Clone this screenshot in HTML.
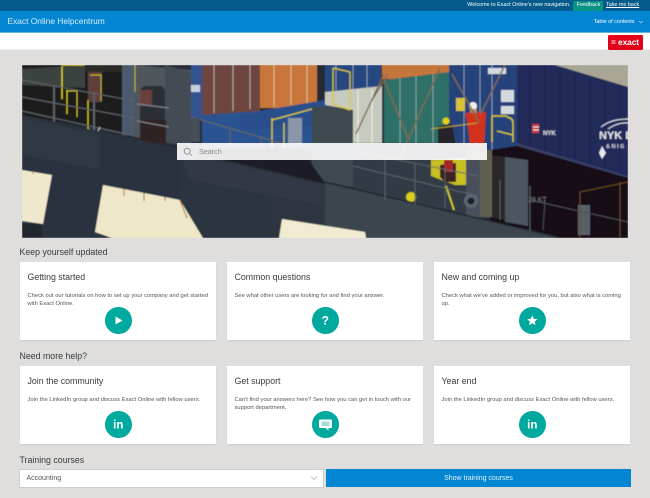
<!DOCTYPE html>
<html>
<head>
<meta charset="utf-8">
<style>
html,body{margin:0;padding:0}
body{width:650px;height:498px;overflow:hidden;background:#dfdedc;font-family:"Liberation Sans",Arial,sans-serif;position:relative}
div,svg,span{position:absolute;box-sizing:border-box}
.t{white-space:nowrap}
.h{left:19.5px;font-size:8.8px;color:#3a3a3a;white-space:nowrap;line-height:12px}
.card{width:196px;height:78px;background:#fff;box-shadow:0 1px 1px rgba(0,0,0,.08)}
.card .ti{left:7.5px;top:9px;font-size:8.8px;line-height:13px;color:#3a3a3a;white-space:nowrap}
.card .b{left:7.5px;top:29.5px;width:184px;font-size:5.8px;line-height:8.5px;color:#555}
.c{width:26.6px;height:26.6px;border-radius:50%;background:#00a99d;left:85px;top:45px}
.c svg{left:0;top:0}
</style>
</head>
<body>
<div style="left:0;top:0;width:650px;height:11px;background:#045b8b"></div>
<div style="left:0;top:11px;width:650px;height:21px;background:#0286d2"></div>
<div style="left:0;top:32px;width:650px;height:1px;background:#5fb3e4"></div>
<div style="left:0;top:33px;width:650px;height:17px;background:#fff"></div>
<div style="left:0;top:49px;width:650px;height:1px;background:#eeeeec"></div>
<div class="t" style="left:7.5px;top:15px;font-size:8.4px;line-height:12px;color:#d9eefa">Exact Online Helpcentrum</div>
<div class="t" style="left:467.3px;top:1px;font-size:5.4px;line-height:9px;color:#fff">Welcome to Exact Online's new navigation.</div>
<div style="left:573px;top:1px;width:30px;height:10px;background:#079283"></div>
<div class="t" style="left:576.7px;top:1px;font-size:5.4px;line-height:9px;color:#fff">Feedback</div>
<div class="t" style="left:606px;top:1px;font-size:5.4px;line-height:9px;color:#fff;text-decoration:underline">Take me back</div>
<div class="t" style="left:593.7px;top:17.5px;font-size:5.4px;line-height:9px;color:#fff">Table of contents</div>
<svg style="left:638px;top:20px" width="6" height="4" viewBox="0 0 6 4"><path d="M1 1l2 2 2-2" fill="none" stroke="#bfe0f5" stroke-width=".6"/></svg>
<div style="left:608px;top:35px;width:35px;height:15px;background:#e2001a;border-radius:1.5px"></div>
<div class="t" style="left:611px;top:37px;font-size:8.4px;line-height:10px;font-weight:bold;color:#fff;letter-spacing:-.1px">= exact</div>

<svg style="left:22px;top:65px" width="606" height="173" viewBox="22 65 606 173">
<defs><filter id="bl" x="-2%" y="-2%" width="104%" height="104%"><feGaussianBlur stdDeviation=".6"/></filter>
<linearGradient id="hg" x1="0" y1="0" x2="1" y2="0"><stop offset="0" stop-color="#2a3240"/><stop offset=".5" stop-color="#2d3541"/><stop offset="1" stop-color="#3b444c"/></linearGradient></defs>
<g filter="url(#bl)">
<rect x="22" y="65" width="606" height="173" fill="#262c36"/>
<!-- top-left superstructure -->
<polygon points="22,65 135,65 135,135 22,115" fill="#1a1b1e"/>
<polygon points="22,69 85,65 85,88 22,85" fill="#3b4341"/>
<polygon points="85,65 135,65 135,72 85,72" fill="#2a2a26"/>
<rect x="88" y="72" width="14" height="30" fill="#5e3f3c"/>
<rect x="122" y="65" width="13" height="70" fill="#4b5a6c"/>
<polygon points="135,65 191,70 191,147 135,137" fill="#50565c"/>
<polygon points="165,65 191,72 191,147 165,142" fill="#454c55"/>
<path d="M140 130V92q0-6 8-6h11q6 0 6 8v51z" fill="#2a2e36"/>
<rect x="140" y="120" width="26" height="23" fill="#2f2220"/>
<rect x="140" y="90" width="12" height="16" fill="#6a3f3e"/>
<path d="M66 91h11v26" fill="none" stroke="#c9b92a" stroke-width="1"/><path d="M67 90v24M88 100v30" fill="none" stroke="#d8c520" stroke-width="1.200"/>
<path d="M84 65h-22M62 66v33" fill="none" stroke="#e6d616" stroke-width="1.300"/>
<path d="M90 75h11v26M135 65v27" fill="none" stroke="#c9b92a" stroke-width=".9"/>
<path d="M22 80l113 21M22 97l113 21M22 111l113 25" fill="none" stroke="#5b6268" stroke-width="1.200"/>
<path d="M54 85v40M94 92v45" fill="none" stroke="#5b6268" stroke-width="2"/>
<path d="M137 104l32 4M137 121l32 6" fill="none" stroke="#7c838a" stroke-width="1.200"/>
<path d="M86 136l4-7M96 135l4-8" stroke="#cfd3d0" stroke-width=".9"/>
<!-- containers -->
<rect x="191" y="65" width="11" height="55" fill="#32528f"/>
<rect x="191" y="85" width="9" height="7" fill="#c9d2dc"/>
<rect x="202" y="65" width="58" height="50" fill="#6e4540"/>
<path d="M214 65v48M233 65v46M250 65v44" stroke="#b5a8a0" stroke-width="1"/>
<rect x="260" y="65" width="57" height="43" fill="#c8763a"/>
<path d="M274 65v42M291 65v40M307 65v38" stroke="#e5bb90" stroke-width="1"/>
<polygon points="202,115 260,111 325,100 325,148 202,148" fill="#2c5291"/>
<polygon points="241,116 325,100 325,125 241,130" fill="#294d8c"/>
<rect x="288" y="118" width="14" height="26" fill="#8a97a8"/>
<rect x="325" y="65" width="56" height="27" fill="#27467f"/>
<path d="M336 65v25M353 65v25M367 65v24" stroke="#9fb0c4" stroke-width=".8"/>
<polygon points="325,92 382,86 382,170 325,165" fill="#c6cabf"/>
<path d="M358 90v75M372 90v75" stroke="#eef0ea" stroke-width="1"/>
<rect x="382" y="65" width="67" height="14" fill="#c6743a"/>
<polygon points="384,80 449,72 449,172 384,172" fill="#2f6f68"/>
<path d="M400 78v90M416 76v90M433 74v90" stroke="#7fa9a2" stroke-width="1"/>
<rect x="449" y="65" width="68" height="90" fill="#25427a"/>
<path d="M464 65v85M480 65v85M492 65v85" stroke="#8fa2bf" stroke-width=".9"/>
<rect x="456" y="98" width="9" height="13" fill="#d8c23a"/>
<rect x="501" y="90" width="13" height="12" fill="#d5dae0"/>
<rect x="501" y="106" width="13" height="8" fill="#d5dae0"/>
<rect x="488" y="68" width="18" height="6" fill="#d5dae0"/>
<!-- big navy container -->
<polygon points="517,65 555,65 628,87 628,176 517,145" fill="#242a5a"/>
<path d="M530 65v85M545 65v90M560 70v90M575 75v90M590 80v90M605 83v90M620 85v90" stroke="#1b2049" stroke-width="1.200"/>
<polygon points="555,65 628,65 628,87" fill="#a9a696"/>
<polygon points="517,143 628,176 628,178 517,148" fill="#3b4068"/>
<rect x="532" y="124" width="7" height="9" fill="#c63a3f"/>
<path d="M533 127h6M533 130h6" stroke="#f2ecec" stroke-width="1"/>
<text x="543" y="135" font-family="Liberation Sans" font-size="6" font-weight="bold" fill="#e6e6ee">NYK</text>
<text x="599" y="139" font-family="Liberation Sans" font-size="11" font-weight="bold" fill="#e6e6ee">NYK L</text>
<text x="606" y="148" font-family="Liberation Sans" font-size="5.500" font-weight="bold" fill="#d9d9e6">&amp; N I G</text>
<polygon points="602,146 606,153 602,159 599,153" fill="#e8e8f0"/>
<path d="M601 127q10-8 27-8M608 129q10-7 20-6" fill="none" stroke="#e6e6ee" stroke-width="1"/>
<!-- lower dark bay -->
<polygon points="517,146 628,178 628,238 558,238 490,220 490,150" fill="#140b12"/>
<polygon points="505,157 528,160 528,226 505,222" fill="#4d5560"/>
<polygon points="490,155 505,157 505,220 490,217" fill="#2a262c"/>
<rect x="578" y="205" width="12" height="30" fill="#586067"/>
<path d="M580 192l48-10M580 192v45M620 182v55" fill="none" stroke="#6a4c22" stroke-width="1"/>
<path d="M530 200l98 22M545 200l-2 30" fill="none" stroke="#4c5158" stroke-width=".9"/>
<text x="528" y="202" font-family="Liberation Sans" font-size="7" fill="#7a7c80">29  KT</text>
<!-- deck & equipment -->
<polygon points="353,143 487,143 490,218 470,218 353,188" fill="#333a44"/>
<rect x="312" y="107" width="13" height="75" fill="#3d4850"/>
<polygon points="325,105 353,110 353,187 325,184" fill="#3d4850"/>
<rect x="467" y="150" width="25" height="67" fill="#625e50"/>
<polygon points="466,160 480,160 480,217 466,214" fill="#47505c"/>
<circle cx="471" cy="201" r="7" fill="#5b6570"/>
<circle cx="471" cy="201" r="3.500" fill="#1e2228"/>
<polygon points="431,160 466,158 466,185 455,185 431,176" fill="#c8bf20"/>
<polygon points="440,165 456,163 456,182 445,182 440,177" fill="#3a2226"/>
<polygon points="444,160 453,160 453,172 444,172" fill="#a32625"/>
<path d="M446 186l8 24" stroke="#d7cc20" stroke-width="1.800"/>
<circle cx="411" cy="197" r="5" fill="#d8d014"/>
<path d="M272 120l40-11M272 118v48M284 123v30" fill="none" stroke="#d9c91e" stroke-width="1.400"/>
<path d="M333 68l17 4v38M333 68v36l17 6" fill="none" stroke="#d9c91e" stroke-width="1.300"/>
<path d="M492 116v26M507 117q6 1 6 6v19M492 116h15M497 131l16 4" fill="none" stroke="#d9c91e" stroke-width="1.400"/>
<!-- people -->
<polygon points="465,113 486,112 484,146 470,146 468,126" fill="#d2321c"/>
<circle cx="473" cy="106" r="4" fill="#f0f0ee"/>
<rect x="470" y="109" width="7" height="4" fill="#b88664"/>
<polygon points="438,126 452,124 456,146 438,146" fill="#28202a"/>
<circle cx="446" cy="121" r="3.500" fill="#e3d010"/>
<path d="M431 129l46-6" stroke="#bfa92a" stroke-width=".9"/>
<!-- braces -->
<path d="M384 74l-28 60M388 74l-16 26M384 80l24 58M440 68l-40 90M452 74l28 50M505 65l-25 50" fill="none" stroke="#7f6a4e" stroke-width="1.400"/>
<!-- rail middle -->
<path d="M191 117l110 32M230 130v30M261 138v30M292 148v27" fill="none" stroke="#5c666e" stroke-width="1.400"/>
<polygon points="191,118 200,118 200,142 191,142" fill="#454e56"/>
<polygon points="177,148 300,148 325,183" fill="#1c1f26"/>
<!-- hull -->
<polygon points="22,115 177,148 325,183 558,238 22,238" fill="url(#hg)"/>
<polygon points="325,183 500,223 558,238 325,238" fill="#3a444d"/>
<polygon points="22,118 100,134 100,170 22,155" fill="#2f3742"/>
<polygon points="180,152 320,185 320,205 190,180" fill="#303944"/>
<path d="M177 148l148 35" stroke="#1b1c20" stroke-width="1.500"/>
<path d="M325 182l233 55" stroke="#23272d" stroke-width="1.500"/>
<path d="M353 151l125 25M353 166l125 30M385 155v45M415 163v42M445 168v40M500 180v40M530 186v45" fill="none" stroke="#5c666e" stroke-width=".9"/>
<!-- white patches -->
<polygon points="22,170 52,175 43,224 22,221" fill="#efe8cc"/>
<polygon points="103,185 180,200 203,238 112,238 95,232" fill="#efe8c8"/>
<polygon points="282,219 365,232 366,238 279,238" fill="#f1ebd2"/>
<path d="M33 171v3M124 189v7M144 193v8M165 197v4M180 200l7 18" stroke="#a9642a" stroke-width="1"/>
<rect x="22" y="224" width="20" height="14" fill="#20252e"/>
</g>
</svg>

<div style="left:177px;top:143px;width:310px;height:17px;background:rgba(255,255,255,.9)"></div>
<svg style="left:183px;top:147px" width="10" height="10" viewBox="0 0 10 10"><circle cx="4.200" cy="4.200" r="3" fill="none" stroke="#8a8a8a" stroke-width=".8"/><path d="M6.400 6.400l2.600 2.600" stroke="#8a8a8a" stroke-width=".8"/></svg>
<div class="t" style="left:199px;top:146px;font-size:7.200px;line-height:11px;color:#888">Search</div>

<div class="h" style="top:246px">Keep yourself updated</div>

<div class="card" style="left:20px;top:262px">
<div class="ti">Getting started</div>
<div class="b">Check out our tutorials on how to set up your company and get started with Exact Online.</div>
<div class="c"><svg width="27" height="27" viewBox="0 0 27 27"><path d="M10.500 9.500v8l7-4z" fill="#fff"/></svg></div>
</div>
<div class="card" style="left:227px;top:262px">
<div class="ti">Common questions</div>
<div class="b">See what other users are looking for and find your answer.</div>
<div class="c"><svg width="27" height="27" viewBox="0 0 27 27"><text x="13.300" y="17.500" text-anchor="middle" font-family="Liberation Sans" font-size="12" font-weight="bold" fill="#fff">?</text></svg></div>
</div>
<div class="card" style="left:434px;top:262px">
<div class="ti">New and coming up</div>
<div class="b">Check what we've added or improved for you, but also what is coming up.</div>
<div class="c"><svg width="27" height="27" viewBox="0 0 27 27"><path d="M13.300 8.500l1.500 3.300 3.600.4-2.700 2.400.8 3.500-3.200-1.800-3.200 1.800.8-3.500-2.700-2.400 3.600-.4z" fill="#fff"/></svg></div>
</div>

<div class="h" style="top:350px">Need more help?</div>

<div class="card" style="left:20px;top:366px">
<div class="ti">Join the community</div>
<div class="b">Join the LinkedIn group and discuss Exact Online with fellow users.</div>
<div class="c"><svg width="27" height="27" viewBox="0 0 27 27"><text x="13.300" y="17.500" text-anchor="middle" font-family="Liberation Sans" font-size="11.500" font-weight="bold" fill="#fff">in</text></svg></div>
</div>
<div class="card" style="left:227px;top:366px">
<div class="ti">Get support</div>
<div class="b">Can't find your answers here? See how you can get in touch with our support department.</div>
<div class="c"><svg width="27" height="27" viewBox="0 0 27 27"><path d="M8 8.500h11a1 1 0 0 1 1 1v6.500a1 1 0 0 1-1 1h-2.500v2.500l-3-2.500H8a1 1 0 0 1-1-1V9.500a1 1 0 0 1 1-1z" fill="#fff"/><rect x="9.500" y="10.500" width="8" height="4.500" fill="#a5dcd8"/></svg></div>
</div>
<div class="card" style="left:434px;top:366px">
<div class="ti">Year end</div>
<div class="b">Join the LinkedIn group and discuss Exact Online with fellow users.</div>
<div class="c"><svg width="27" height="27" viewBox="0 0 27 27"><text x="13.300" y="17.500" text-anchor="middle" font-family="Liberation Sans" font-size="11.500" font-weight="bold" fill="#fff">in</text></svg></div>
</div>

<div class="h" style="top:454px">Training courses</div>
<div style="left:19px;top:469px;width:305px;height:18.500px;background:#fff;border:1px solid #cfcfcd"></div>
<div class="t" style="left:26.500px;top:473px;font-size:7px;line-height:11px;color:#555">Accounting</div>
<svg style="left:310px;top:475px" width="8" height="6" viewBox="0 0 8 6"><path d="M1 1.500l3 3 3-3" fill="none" stroke="#aaa" stroke-width=".7"/></svg>
<div style="left:326px;top:469px;width:305px;height:18px;background:#0286d2"></div>
<div class="t" style="left:326px;top:473px;width:305px;text-align:center;font-size:7px;line-height:11px;color:#e3f2fb">Show training courses</div>
</body>
</html>
